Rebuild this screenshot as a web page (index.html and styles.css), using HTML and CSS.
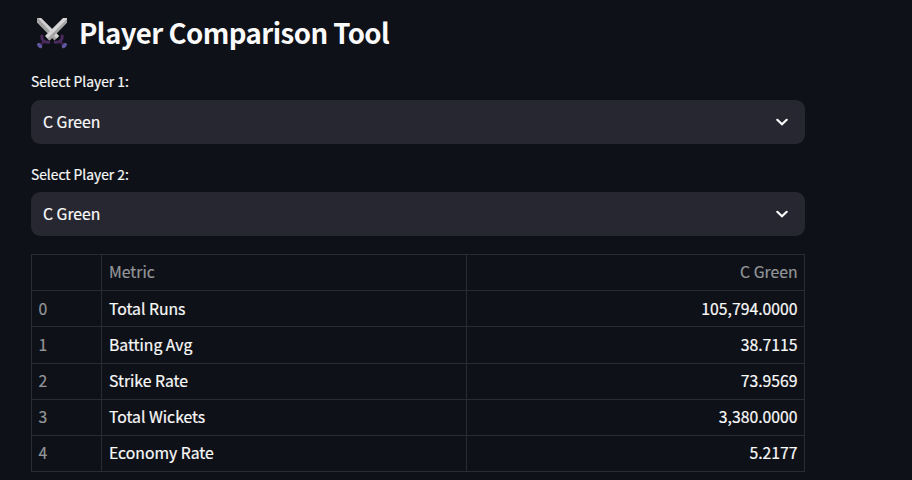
FILE: index.html
```html
<!DOCTYPE html>
<html lang="en">
<head>
<meta charset="utf-8">
<title>Player Comparison Tool</title>
<link rel="stylesheet" href="styles.css">
</head>
<body>
<main class="page">
  <h1 class="title">
    <svg class="swords" viewBox="0 0 32 32" aria-hidden="true">
      <path fill="none" stroke="#39214a" stroke-width="3" d="M9 22.500l-5 5M23 22.500l5 5"/>
      <path fill="none" stroke="#4b2a5e" stroke-width="3" stroke-linecap="round" d="M5.800 18c-.5 4 2 6.500 7 6.300M26.200 18c.5 4-2 6.500-7 6.300"/>
      <path fill="#a3a3a3" d="M1 0h4L23 18l-4.500 4.500L1 4.500z"/>
      <path fill="#d2d2d2" d="M2 0h3L23 18l-2.500 2.500z"/>
      <path fill="#d5d5d5" d="M31 0h-4L9 18l4.500 4.500L31 4.500z"/>
      <path fill="#a5a5a5" d="M31 1v3.500L13.500 22.500l-2-2z"/>
      <path fill="none" stroke="#6256a0" stroke-width="3.600" stroke-linecap="round" d="M2.800 26.700l1.700 1.700M29.200 26.700l-1.700 1.700"/>
    </svg>
    <span>Player Comparison Tool</span>
  </h1>
  <label class="label">Select Player 1:</label>
  <div class="select">
    <span>C Green</span>
    <svg class="chevron" viewBox="0 0 12 8" aria-hidden="true"><path d="M1.300 1.800L6 6.300l4.700-4.500"/></svg>
  </div>
  <label class="label second">Select Player 2:</label>
  <div class="select">
    <span>C Green</span>
    <svg class="chevron" viewBox="0 0 12 8" aria-hidden="true"><path d="M1.300 1.800L6 6.300l4.700-4.500"/></svg>
  </div>
  <div class="table">
    <div class="row head"><span></span><span>Metric</span><span>C Green</span></div>
    <div class="row low"><span>0</span><span>Total Runs</span><span>105,794.0000</span></div>
    <div class="row low"><span>1</span><span>Batting Avg</span><span>38.7115</span></div>
    <div class="row"><span>2</span><span>Strike Rate</span><span>73.9569</span></div>
    <div class="row"><span>3</span><span>Total Wickets</span><span>3,380.0000</span></div>
    <div class="row"><span>4</span><span>Economy Rate</span><span>5.2177</span></div>
  </div>
</main>
</body>
</html>
```
FILE: styles.css
```css
* { box-sizing: border-box; }
body {
  margin: 0;
  height: 480px;
  overflow: hidden;
  background: #0e1117;
  color: #fafafa;
  font: 15.75px/24px "Noto Sans CJK SC", sans-serif;
  -webkit-text-stroke: 0.2px currentColor;
}
.page { width: 774px; margin-left: 31px; padding-top: 13px; }
.title {
  display: flex;
  height: 40px;
  margin: 0;
  font-size: 27.6px;
  line-height: 38px;
  font-weight: 700;
  letter-spacing: -0.56px;
  white-space: nowrap;
  -webkit-text-stroke: 0;
}
.swords { width: 32px; height: 32px; margin: 5px 11px 0 5px; }
.label {
  display: block;
  height: 24px;
  margin-top: 16px;
  font-size: 13.8px;
  line-height: 24px;
}
.label.second { margin-top: 18px; }
.select {
  display: flex;
  align-items: center;
  justify-content: space-between;
  height: 44px;
  margin-top: 7px;
  padding: 0 17px 0 12px;
  border-radius: 9px;
  background: #262730;
}
.second + .select { margin-top: 6px; }
.chevron { width: 12px; height: 8px; }
.chevron path {
  fill: none;
  stroke: #fafafa;
  stroke-width: 2.2;
  stroke-linecap: round;
}
.table {
  display: grid;
  grid-template-rows: 36px 36px 37px 36px 36px 36px;
  margin-top: 18px;
  border: solid #292c31;
  border-width: 1px 0 0 1px;
}
.row {
  display: grid;
  grid-template-columns: 70px 365px 338px;
  grid-template-rows: 100%;
}
.row span {
  padding: 0 7px;
  border: solid #292c31;
  border-width: 0 1px 1px 0;
  line-height: 34px;
}
.row.low span { line-height: 36px; }
.row span:first-child { padding-left: 6.5px; }
.row span:last-child { text-align: right; padding-right: 6.5px; }
.row span:first-child, .head span { color: #94969a; }
```
